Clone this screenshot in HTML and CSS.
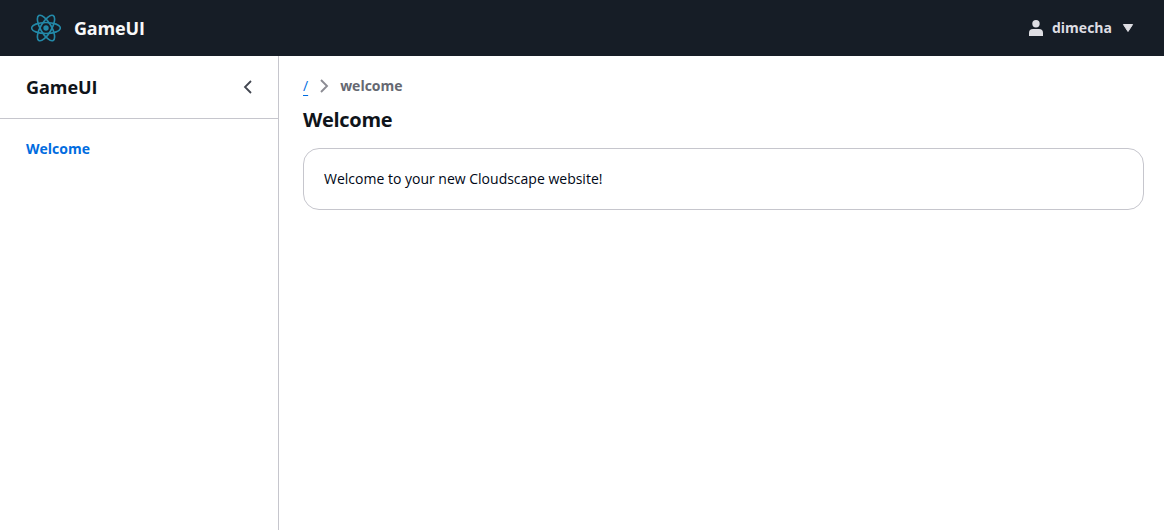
FILE: index.html
```html
<!DOCTYPE html>
<html lang="en">
<head>
<meta charset="utf-8">
<title>GameUI</title>
<link rel="stylesheet" href="styles.css">
</head>
<body>
<header class="topbar">
  <a class="brand">
    <svg class="logo" viewBox="-11.5 -10.232 23 20.463" width="30" height="28">
      <circle r="2.05" fill="currentColor"/>
      <g fill="none" stroke="currentColor" stroke-width="1.25">
        <ellipse rx="11" ry="4.2"/>
        <ellipse rx="11" ry="4.2" transform="rotate(60)"/>
        <ellipse rx="11" ry="4.2" transform="rotate(120)"/>
      </g>
    </svg>
    <span class="brand-name">GameUI</span>
  </a>
  <button class="user">
    <svg viewBox="0 0 16 16" width="16" height="16" fill="currentColor"><circle cx="8" cy="3.7" r="3.7"/><path d="M1 16v-3a4 4 0 0 1 4-4h6a4 4 0 0 1 4 4v3z"/></svg>
    <span class="user-name">dimecha</span>
    <svg viewBox="0 0 16 16" width="16" height="16" fill="currentColor" stroke="currentColor" stroke-linejoin="round"><path d="M3.4 4.5h9.2L8 11.5z"/></svg>
  </button>
</header>
<div class="layout">
  <nav class="sidebar">
    <div class="side-head">
      <h2>GameUI</h2>
      <svg viewBox="0 0 16 16" width="16" height="16" fill="none" stroke="#424650" stroke-width="1.8"><path d="M11 2 5 8l6 6"/></svg>
    </div>
    <a class="side-link">Welcome</a>
  </nav>
  <main class="content">
    <div class="crumbs">
      <a class="root">/</a>
      <svg viewBox="0 0 16 16" width="16" height="16" fill="none" stroke="#8c8c94" stroke-width="1.9"><path d="m5 2 6 6-6 6"/></svg>
      <span>welcome</span>
    </div>
    <h1>Welcome</h1>
    <section class="card">Welcome to your new Cloudscape website!</section>
  </main>
</div>
</body>
</html>
```
FILE: styles.css
```css
* { box-sizing: border-box; }
body { margin: 0; font: 14px/20px "Open Sans", "Noto Sans", sans-serif; color: #0f141a; background: #fff; height: 100vh; display: flex; flex-direction: column; }
h1, h2 { margin: 0; }
svg { display: block; flex: none; }
.topbar { height: 56px; flex: none; background: #161d26; display: flex; align-items: center; justify-content: space-between; padding: 0 28px 0 31px; }
.brand { display: flex; align-items: center; gap: 13px; }
.logo { color: #2389a8; }
.brand-name { font-size: 18px; font-weight: 700; letter-spacing: -0.18px; line-height: 22px; color: #f9f9fa; }
.user { display: flex; align-items: center; gap: 8px; border: 0; padding: 0; background: none; font: inherit; font-weight: 700; color: #dedee3; }
.layout { flex: 1; display: flex; }
.sidebar { width: 279px; flex: none; border-right: 1px solid #c6c6cd; }
.side-head { height: 63px; border-bottom: 1px solid #c6c6cd; display: flex; align-items: center; justify-content: space-between; padding: 0 22px 0 26px; }
.side-head h2 { font-size: 18px; line-height: 22px; font-weight: 700; letter-spacing: -0.05px; }
.side-link { display: block; margin: 20px 26px; font-weight: 700; color: #006ce0; }
.content { flex: 1; padding: 20px 20px 0 24px; }
.crumbs { display: flex; align-items: center; height: 20px; gap: 8px; font-weight: 700; color: #656871; }
.root { font-weight: 400; color: #006ce0; text-decoration: underline; text-decoration-thickness: 1px; text-underline-offset: 4px; }
h1 { margin-top: 12px; font-size: 20px; line-height: 24px; font-weight: 700; letter-spacing: -0.3px; }
.card { margin-top: 16px; height: 62px; border: 1px solid #c6c6cd; border-radius: 16px; padding: 20px; color: #000716; }
```
